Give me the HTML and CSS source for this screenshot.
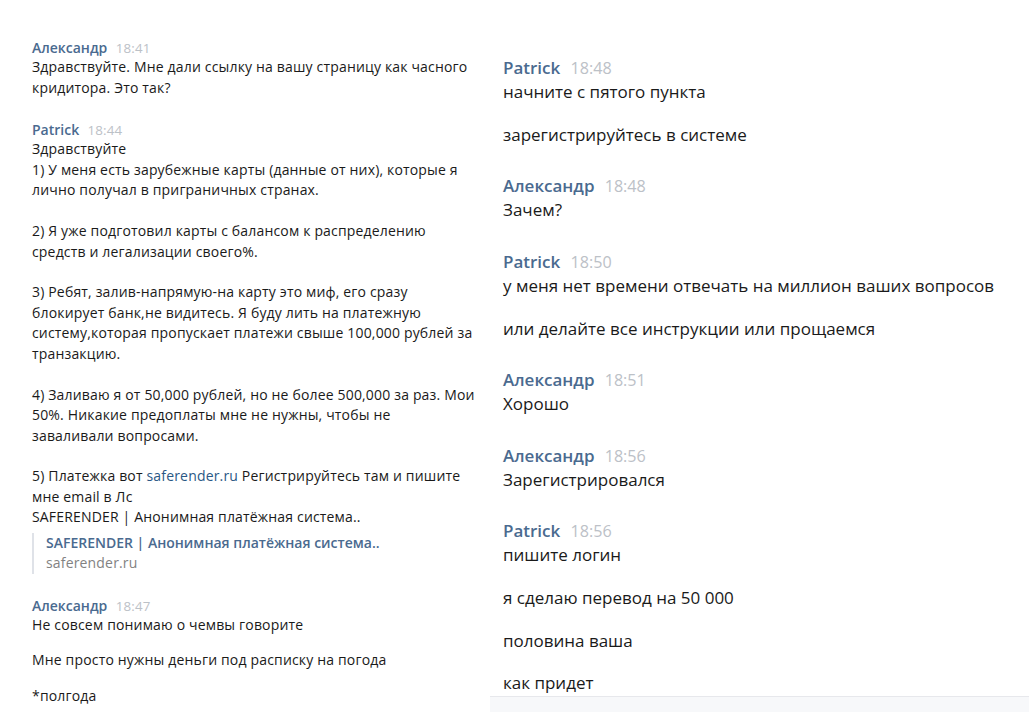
FILE: index.html
```html
<!DOCTYPE html>
<html>
<head>
  <title>Диалог</title>
  <link rel="stylesheet" href="styles.css">
</head>
<body>
  <div class="page">
    <div class="chat chat-left">
      <div class="msg">
        <div class="msg-head"><span class="author">Александр</span><span class="time">18:41</span></div>
        <p class="msg-text">Здравствуйте. Мне дали ссылку на вашу страницу как часного кридитора. Это так?</p>
      </div>

      <div class="msg">
        <div class="msg-head"><span class="author">Patrick</span><span class="time">18:44</span></div>
        <p class="msg-text">Здравствуйте<br>
          1) У меня есть зарубежные карты (данные от них), которые я лично получал в приграничных странах.<br><br>
          2) Я уже подготовил карты с балансом к распределению средств и легализации своего%.<br><br>
          3) Ребят, залив-напрямую-на карту это миф, его сразу блокирует банк,не видитесь. Я буду лить на платежную систему,которая пропускает платежи свыше 100,000 рублей за транзакцию.<br><br>
          4) Заливаю я от 50,000 рублей, но не более 500,000 за раз. Мои 50%. Никакие предоплаты мне не нужны, чтобы не<br>
          заваливали вопросами.<br><br>
          5) Платежка вот <a class="link" href="#">saferender.ru</a> Регистрируйтесь там и пишите мне email в Лс<br>
          SAFERENDER | Анонимная платёжная система..</p>
        <div class="preview">
          <div class="preview-title">SAFERENDER | Анонимная платёжная система..</div>
          <div class="preview-url">saferender.ru</div>
        </div>
      </div>

      <div class="msg">
        <div class="msg-head"><span class="author">Александр</span><span class="time">18:47</span></div>
        <p class="msg-text">Не совсем понимаю о чемвы говорите</p>
        <p class="msg-text">Мне просто нужны деньги под расписку на погода</p>
        <p class="msg-text">*полгода</p>
      </div>
    </div>

    <div class="side">
      <div class="chat chat-right">
        <div class="msg">
          <div class="msg-head"><span class="author">Patrick</span><span class="time">18:48</span></div>
          <p class="msg-text">начните с пятого пункта</p>
          <p class="msg-text">зарегистрируйтесь в системе</p>
        </div>
        <div class="msg">
          <div class="msg-head"><span class="author">Александр</span><span class="time">18:48</span></div>
          <p class="msg-text">Зачем?</p>
        </div>
        <div class="msg">
          <div class="msg-head"><span class="author">Patrick</span><span class="time">18:50</span></div>
          <p class="msg-text">у меня нет времени отвечать на миллион ваших вопросов</p>
          <p class="msg-text">или делайте все инструкции или прощаемся</p>
        </div>
        <div class="msg">
          <div class="msg-head"><span class="author">Александр</span><span class="time">18:51</span></div>
          <p class="msg-text">Хорошо</p>
        </div>
        <div class="msg">
          <div class="msg-head"><span class="author">Александр</span><span class="time">18:56</span></div>
          <p class="msg-text">Зарегистрировался</p>
        </div>
        <div class="msg">
          <div class="msg-head"><span class="author">Patrick</span><span class="time">18:56</span></div>
          <p class="msg-text">пишите логин</p>
          <p class="msg-text">я сделаю перевод на 50 000</p>
          <p class="msg-text">половина ваша</p>
          <p class="msg-text">как придет</p>
        </div>
      </div>
      <div class="composer"></div>
    </div>
  </div>
</body>
</html>
```

FILE: styles.css
```css
body {
  margin: 0;
  background: #ffffff;
  color: #1a1a1a;
  font-family: "Open Sans", Roboto, "Liberation Sans", sans-serif;
}

.page {
  display: grid;
  grid-template-columns: 490px 1fr;
  height: 712px;
  overflow: hidden;
}

.chat {
  line-height: 1.46;
  letter-spacing: 0.012em;
}

.chat-left {
  font-size: 14px;
  padding: 38px 10px 0 32px;
}

.side {
  display: flex;
  flex-direction: column;
  min-width: 0;
}

.chat-right {
  flex: 1;
  overflow: hidden;
  font-size: 17px;
  line-height: 1.44;
  letter-spacing: 0;
  padding: 56px 20px 0 13px;
}

.msg + .msg {
  margin-top: 1.6em;
}

.msg-head {
  display: flex;
  align-items: baseline;
  gap: 0.6em;
  line-height: 1.36;
}

.author {
  font-weight: 600;
  color: #4a6a8f;
  letter-spacing: 0;
}

.time {
  font-size: 0.95em;
  color: #bcc1c7;
}

.msg-text {
  margin: 0;
}

.msg-text + .msg-text {
  margin-top: 1.07em;
}

.link {
  color: #2a5885;
  text-decoration: none;
}

.preview {
  margin-top: 5px;
  padding-left: 12px;
  border-left: 2px solid #dfe2e8;
}

.preview-title {
  font-weight: 600;
  color: #4a6a8f;
  letter-spacing: 0;
}

.preview-url {
  color: #828282;
}

.composer {
  height: 22px;
  background: #f7f8fa;
  border-top: 1px solid #e7e8ec;
}
```
